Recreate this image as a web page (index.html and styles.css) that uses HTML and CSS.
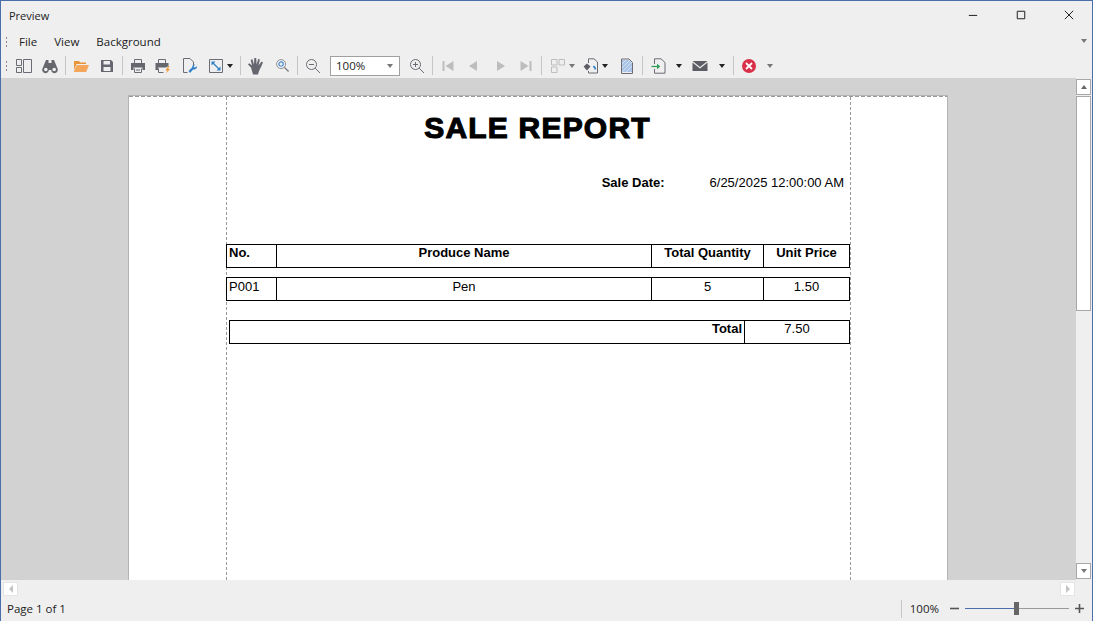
FILE: index.html
```html
<!DOCTYPE html>
<html>

<head>
    <meta charset="utf-8" />
    <title>Preview</title>
    <link rel="stylesheet" href="styles.css">
</head>

<body>
    <div class="window">
        <div class="titlebar">
            <span class="title">Preview</span>
            <div class="winbtns">
                <svg viewBox="0 0 12 12"><path d="M1 6.500h10" /></svg>
                <svg viewBox="0 0 12 12"><path d="M1.500 1.500h9v9h-9z" /></svg>
                <svg viewBox="0 0 12 12"><path d="M1 1l10 10M11 1L1 11" /></svg>
            </div>
        </div>

        <div class="menubar">
            <i class="grip"></i>
            <span class="menu-item">File</span>
            <span class="menu-item">View</span>
            <span class="menu-item">Background</span>
            <i class="caret caret-soft menu-more"></i>
        </div>

        <div class="toolbar">
            <i class="grip"></i>
            <span class="tool tool-first">
                <svg viewBox="0 0 16 16" class="line"><path d="M.5 1.500h5v6h-5zM.5 9.500h5v5h-5zM7.500 1.500h8v13h-8z" /></svg>
            </span>
            <span class="tool">
                <svg viewBox="0 0 16 16" class="solid"><path d="M4 2h2.500v3h3V2H12l3.500 8.500a3.300 3.300 0 1 1-6.300 1.500H6.800a3.300 3.300 0 1 1-6.300-1.500z" /><circle cx="3.800" cy="11.500" r="1.800" fill="#efefef" /><circle cx="12.200" cy="11.500" r="1.800" fill="#efefef" /></svg>
            </span>
            <i class="sep"></i>
            <span class="tool">
                <svg viewBox="0 0 16 16"><path d="M1 3h5l1 1.500h6V6H3.500L1 12z" fill="#e8943a" /><path d="M3.800 7H16l-2.800 7H.6z" fill="#f4a65a" /></svg>
            </span>
            <span class="tool">
                <svg viewBox="0 0 16 16" class="solid"><path fill-rule="evenodd" d="M2 2h10l2 2v10H2zM4.500 3v3.500h6.500V3zM4.500 9v4h7V9z" /></svg>
            </span>
            <i class="sep"></i>
            <span class="tool">
                <svg viewBox="0 0 16 16"><path class="line" d="M4.500 5V1.500h7V5M4.500 10.500v4h7v-4" /><path class="solid" fill-rule="evenodd" d="M1 5h14v7h-2.500V9.500h-9V12H1z" /><path class="solid" d="M6 11.500h4v1H6z" /></svg>
            </span>
            <span class="tool tool-print2">
                <svg viewBox="0 0 16 16"><path class="line" d="M3.500 5V1.500h7V5M3.500 10.500v4h5" /><path class="solid" d="M.5 5H13.500v3l-2.500 1.500H3V12H.5z" /><path d="M13.500 8l-3 4.500h2l-1.500 3 4-4.500h-2l1.500-3z" fill="#f0932b" /></svg>
            </span>
            <span class="tool tool-setup">
                <svg viewBox="0 0 16 16"><path class="line" d="M6.500 14.500h-4V.5H9l3.500 3.500v3" /><path d="M7.500 13l3.800-3.800a2.400 2.400 0 0 1 3-2.700l-1.600 1.600.3 1.200 1.200.3 1.500-1.500a2.500 2.500 0 0 1-3.300 3.100L9 15z" fill="#2f80c8" /></svg>
            </span>
            <span class="tool tool-scale">
                <svg viewBox="0 0 16 16"><path class="line" d="M1.500 1.500h13v13h-13z" /><path d="M5 5l6 6" stroke="#2f80c8" stroke-width="1.200" fill="none" /><path d="M3.500 3.500h4l-4 4zM12.500 12.500h-4l4-4z" fill="#2f80c8" /></svg>
                <i class="caret"></i>
            </span>
            <i class="sep"></i>
            <span class="tool">
                <svg viewBox="0 0 18 18" class="solid icon-big"><path d="M4 10.500L1 7.500l1.200-1.200L5 8.500 3.700 2.700l1.700-.4L7 7.500 7.300 1h1.900l.4 6.500L11.200 2l1.700.5L11.500 8.500 14.500 4.500l1.500 1-2.500 5.500-1.500 3-1 3.500H6z" /></svg>
            </span>
            <span class="tool">
                <svg viewBox="0 0 16 16" class="icon-small"><circle cx="6.500" cy="6.500" r="4.800" fill="none" stroke="#8a8a92" /><circle cx="6.500" cy="6.500" r="2.300" fill="none" stroke="#4d8fd0" stroke-width="1.300" /><path d="M10 10l4.500 4.500" stroke="#7a7a82" stroke-width="1.500" /></svg>
            </span>
            <i class="sep"></i>
            <span class="tool">
                <svg viewBox="0 0 16 16" class="line"><circle cx="6.500" cy="6.500" r="5" /><path d="M4 6.500h5M10.200 10.200l4.800 4.800" /></svg>
            </span>
            <div class="combo">100%<i class="caret caret-soft"></i></div>
            <span class="tool">
                <svg viewBox="0 0 16 16" class="line"><circle cx="6.500" cy="6.500" r="5" /><path d="M4 6.500h5M6.500 4v5M10.200 10.200l4.800 4.800" /></svg>
            </span>
            <i class="sep"></i>
            <span class="tool">
                <svg viewBox="0 0 16 16" class="off"><path d="M2.500 3h2v10h-2zM13.500 3v10L5.500 8z" /></svg>
            </span>
            <span class="tool tool-prev">
                <svg viewBox="0 0 16 16" class="off"><path d="M12 3v10L4 8z" /></svg>
            </span>
            <span class="tool tool-next">
                <svg viewBox="0 0 16 16" class="off"><path d="M4 3v10l8-5z" /></svg>
            </span>
            <span class="tool tool-last">
                <svg viewBox="0 0 16 16" class="off"><path d="M2.500 3v10l8-5zM11.500 3h2v10h-2z" /></svg>
            </span>
            <i class="sep sep-wide"></i>
            <span class="tool tool-multi">
                <svg viewBox="0 0 16 16" class="off-line"><path d="M1.500 1.500h5.500v5.500H1.500zM9 1.500h5.500v5.500H9zM1.500 9h5.500v5.500H1.500z" /></svg>
                <i class="caret caret-soft"></i>
            </span>
            <span class="tool tool-mark">
                <svg viewBox="0 0 16 16"><path class="line" d="M5.500 5V.8H11L14.500 4v11H5.500v-2" /><path d="M4 5.500l3.500 3L4 12.500.6 8.500z" fill="#5d5d66" /><path d="M10 8.500c1.500 0 2.300 1 2.300 3" fill="none" stroke="#2f80c8" stroke-width="1.600" /></svg>
                <i class="caret"></i>
            </span>
            <span class="tool tool-doc">
                <svg viewBox="0 0 16 16"><path d="M3 2h7l3 3v9H3z" fill="#a9c4e6" /><path d="M3 6l4-4M3 10l8-8M3 14L13 4M7 14l6-6" stroke="#dfe8f4" stroke-width=".8" /><path class="line" d="M2.500 1H10l3.500 3.500v11h-11z" /></svg>
            </span>
            <i class="sep"></i>
            <span class="tool tool-export">
                <svg viewBox="0 0 16 16"><path class="line" d="M3.500 6V.8H10L14 4.500v10.700H3.500V11" /><path d="M.5 8.500h7" stroke="#2f9e5b" stroke-width="1.300" /><path d="M6 5.800l3.300 2.700L6 11.200z" fill="#2f9e5b" /></svg>
                <i class="caret caret-far"></i>
            </span>
            <span class="tool tool-mail">
                <svg viewBox="0 0 16 16"><path d="M.5 3h15L8 9z" fill="#5d5d66" /><path d="M.5 4.500L8 10.500l7.500-6V13H.5z" fill="#5d5d66" /></svg>
                <i class="caret caret-far"></i>
            </span>
            <i class="sep"></i>
            <span class="tool tool-close">
                <svg viewBox="0 0 16 16"><circle cx="8" cy="8" r="7" fill="#d9304a" /><path d="M5 5l6 6M11 5l-6 6" stroke="#fff" stroke-width="1.800" /></svg>
                <i class="caret caret-soft caret-far"></i>
            </span>
        </div>

        <div class="viewer">
            <div class="canvas">
                <div class="page">
                    <div class="report">
                        <h1 class="report-title">SALE REPORT</h1>
                        <div class="sale-date">
                            <b>Sale Date:</b>
                            <span>6/25/2025 12:00:00 AM</span>
                        </div>

                        <div class="row row-head">
                            <div class="cell cell-left">No.</div>
                            <div class="cell">Produce Name</div>
                            <div class="cell">Total Quantity</div>
                            <div class="cell">Unit Price</div>
                        </div>
                        <div class="row row-body">
                            <div class="cell cell-left">P001</div>
                            <div class="cell">Pen</div>
                            <div class="cell">5</div>
                            <div class="cell">1.50</div>
                        </div>
                        <div class="row row-total">
                            <div class="cell cell-right"><b>Total</b></div>
                            <div class="cell">7.50</div>
                        </div>
                    </div>
                </div>
            </div>
            <div class="vscroll">
                <span class="sbtn"><i class="caret caret-up"></i></span>
                <span class="thumb"></span>
                <span class="sbtn sbtn-end"><i class="caret caret-soft"></i></span>
            </div>
        </div>

        <div class="hscroll">
            <span class="hbtn"><i class="arrow arrow-left"></i></span>
            <span class="hbtn"><i class="arrow arrow-right"></i></span>
        </div>

        <div class="statusbar">
            <span>Page 1 of 1</span>
            <div class="zoombox">
                <i class="status-sep"></i>
                <span>100%</span>
                <svg class="zoom-sign" viewBox="0 0 9 9"><path d="M0 4.500h9" /></svg>
                <div class="slider"><span class="slider-knob"></span></div>
                <svg class="zoom-sign" viewBox="0 0 9 9"><path d="M0 4.500h9M4.500 0v9" /></svg>
            </div>
        </div>
    </div>
</body>

</html>
```
FILE: styles.css
```css
* {
    box-sizing: border-box;
}

html,
body {
    margin: 0;
    height: 100%;
    overflow: hidden;
}

body {
    font-family: "Open Sans", "Noto Sans", sans-serif;
    font-size: 11.5px;
    color: #222;
}

.window {
    display: flex;
    flex-direction: column;
    height: 621px;
    background-color: #efefef;
    border: 1px solid #4a6ea9;
    border-bottom: 0;
}

/* title bar */
.titlebar {
    display: flex;
    flex: none;
    align-items: center;
    justify-content: space-between;
    height: 30px;
    padding: 0 0 2px 8px;
}

.title {
    font-size: 11px;
}

.winbtns {
    display: flex;
    gap: 38px;
    padding-right: 18px;
}

.winbtns svg {
    width: 10px;
    height: 10px;
    fill: none;
    stroke: #222;
    stroke-width: 1.2;
    overflow: visible;
}

/* menu */
.menubar {
    display: flex;
    flex: none;
    align-items: center;
    height: 22px;
    padding: 0 0 2px 4px;
}

.menu-item {
    margin-left: 11px;
    margin-right: 6px;
}

.menu-more {
    margin-left: auto;
    margin-right: 5px;
}

.grip {
    flex: none;
    width: 3px;
    height: 11px;
    background-image: radial-gradient(circle, #8a8a8a 1px, transparent 1px);
    background-size: 3px 4px;
}

/* toolbar */
.toolbar {
    display: flex;
    flex: none;
    align-items: center;
    height: 25px;
    padding-left: 4px;
}

.tool {
    flex: none;
    display: flex;
    align-items: center;
    justify-content: center;
    width: 26px;
    height: 22px;
}

.tool svg {
    flex: none;
    width: 16px;
    height: 16px;
}

.tool .icon-small {
    width: 15px;
    height: 15px;
}

.tool .icon-big {
    width: 18px;
    height: 18px;
}

.tool-first { margin-left: 3px; }
.tool-print2 { width: 24px; }
.tool-setup { width: 28px; }
.tool-prev { width: 24px; }
.tool-next { width: 32px; }
.tool-last { width: 18px; }
.tool-doc { width: 26px; }

.tool-scale,
.tool-multi,
.tool-mark,
.tool-export,
.tool-mail,
.tool-close {
    justify-content: flex-start;
}

.tool-scale { width: 35px; padding-left: 5px; }
.tool-multi { width: 34px; padding-left: 6px; }
.tool-mark { width: 36px; padding-left: 5px; }
.tool-export { width: 40px; padding-left: 6px; }
.tool-mail { width: 46px; padding-left: 7px; }
.tool-close { width: 40px; padding-left: 5px; }

.tool .caret {
    margin-left: 3px;
}

.tool .caret-far {
    margin-left: 9px;
}

.tool-mail .caret-far {
    margin-left: 11px;
}

.tool-close .caret-far {
    margin-left: 10px;
}

.line {
    fill: none;
    stroke: #6b6b74;
    stroke-width: 1;
}

.solid {
    fill: #66666f;
}

.off {
    fill: #bdbdbd;
}

.off-line {
    fill: none;
    stroke: #bdbdbd;
}

.sep {
    flex: none;
    width: 1px;
    height: 19px;
    margin: 0 2px;
    background-color: #c6c6c6;
}

.sep-wide {
    margin-left: 6px;
}

.caret {
    flex: none;
    display: inline-block;
    width: 0;
    height: 0;
    border-left: 3.5px solid transparent;
    border-right: 3.5px solid transparent;
    border-top: 4px solid #222;
}

.caret-soft {
    border-top-color: #777;
}

.caret-up {
    border-top: 0;
    border-bottom: 4px solid #666;
}

.combo {
    flex: none;
    display: flex;
    align-items: center;
    justify-content: space-between;
    width: 70px;
    height: 20px;
    margin: 0 4px;
    padding: 0 6px 0 5px;
    background-color: #fff;
    border: 1px solid #a0a0a0;
}

/* viewer */
.viewer {
    display: flex;
    flex: 1;
    min-height: 0;
}

.canvas {
    flex: 1;
    overflow: hidden;
    padding: 17px 0 0 127px;
    background-color: #d2d2d2;
}

/* the dashed top margin line of the sheet is the background */
.page {
    width: 820px;
    height: 600px;
    padding-top: 1px;
    background-color: #fff;
    background-image: repeating-linear-gradient(90deg, #9a9a9a 0 4px, transparent 4px 6px);
    background-size: 100% 1px;
    background-repeat: no-repeat;
    border: 1px solid #b4b4b4;
    border-bottom: 0;
}

.report {
    width: 625px;
    height: 100%;
    margin-left: 97px;
    font-family: "Liberation Sans", Arial, sans-serif;
    font-size: 13px;
    color: #000;
    border-left: 1px dashed #9a9a9a;
    border-right: 1px dashed #9a9a9a;
}

.report-title {
    height: 60px;
    margin: 0;
    padding-top: 1px;
    padding-right: 2px;
    font-size: 30px;
    line-height: 60px;
    font-weight: bold;
    text-align: center;
    letter-spacing: 1.2px;
    -webkit-text-stroke: 1.1px #000;
}

.sale-date {
    display: flex;
    justify-content: flex-end;
    gap: 45px;
    height: 20px;
    margin-top: 16px;
    padding-right: 6px;
    line-height: 20px;
}

.row {
    display: grid;
    grid-template-columns: 49px 375px 112px 86px;
    width: 624px;
    height: 24px;
    margin-left: -1px;
    text-align: center;
    border: 1px solid #000;
}

.cell {
    height: 22px;
    padding-top: 1px;
    line-height: 14px;
    border-left: 1px solid #000;
}

.cell:first-child {
    border-left: 0;
}

.cell-left {
    padding-left: 2px;
    text-align: left;
}

.cell-right {
    padding-right: 2px;
    text-align: right;
}

.row-head {
    margin-top: 51px;
    font-weight: bold;
}

.row-body {
    margin-top: 9px;
}

.row-body .cell {
    padding-top: 2px;
}

.row-total {
    grid-template-columns: 514px 105px;
    width: 621px;
    margin-top: 19px;
    margin-left: 2px;
}

/* scroll bars */
.vscroll {
    flex: none;
    display: flex;
    flex-direction: column;
    width: 16px;
    padding: 1px 0 0 0;
}

.sbtn,
.thumb {
    flex: none;
    width: 15px;
    background-color: #fff;
    border: 1px solid #a8a8a8;
}

.sbtn {
    display: flex;
    align-items: center;
    justify-content: center;
    height: 16px;
}

.sbtn-end {
    margin-top: auto;
    margin-bottom: 1px;
}

.thumb {
    height: 215px;
    margin-top: 1px;
}

.hscroll {
    display: flex;
    flex: none;
    justify-content: space-between;
    height: 18px;
    padding: 2px 17px 0 2px;
}

.hbtn {
    display: flex;
    align-items: center;
    justify-content: center;
    width: 15px;
    height: 14px;
    background-color: #fff;
    border: 1px solid #e4e4e4;
}

.arrow {
    width: 0;
    height: 0;
    border-top: 4px solid transparent;
    border-bottom: 4px solid transparent;
}

.arrow-left {
    border-right: 4px solid #c4c4c4;
}

.arrow-right {
    border-left: 4px solid #c4c4c4;
}

/* status bar */
.statusbar {
    display: flex;
    flex: none;
    align-items: center;
    justify-content: space-between;
    height: 23px;
    padding: 0 8px 2px 6px;
}

.zoombox {
    display: flex;
    align-items: center;
}

.status-sep {
    width: 1px;
    height: 18px;
    margin-right: 8px;
    background-color: #c6c6c6;
}

.zoom-sign {
    width: 9px;
    height: 9px;
    margin-left: 11px;
    fill: none;
    stroke: #555;
    stroke-width: 1.6;
}

.slider {
    position: relative;
    width: 104px;
    height: 1px;
    margin-left: 6px;
    margin-right: -5px;
    background: linear-gradient(90deg, #4a6ea9 0 49px, #9a9a9a 49px);
}

.slider-knob {
    position: absolute;
    left: 49px;
    top: -6px;
    width: 5px;
    height: 13px;
    background-color: #666;
}
```
